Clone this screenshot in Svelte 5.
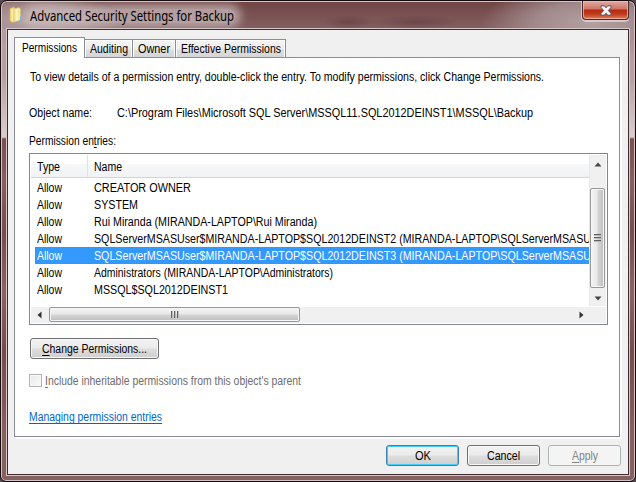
<script>
  const tabs = [
    { label: 'Permissions', box: 71, text: 55, active: true },
    { label: 'Auditing', box: 48, text: 38 },
    { label: 'Owner', box: 43, text: 32 },
    { label: 'Effective Permissions', box: 110, text: 100 }
  ];
  const rows = [
    { name: 'CREATOR OWNER', width: 97 },
    { name: 'SYSTEM', width: 44 },
    { name: 'Rui Miranda (MIRANDA-LAPTOP\\Rui Miranda)', width: 223 },
    { name: 'SQLServerMSASUser$MIRANDA-LAPTOP$SQL2012DEINST2 (MIRANDA-LAPTOP\\SQLServerMSASU', width: 497 },
    { name: 'SQLServerMSASUser$MIRANDA-LAPTOP$SQL2012DEINST3 (MIRANDA-LAPTOP\\SQLServerMSASU', width: 497, selected: true },
    { name: 'Administrators (MIRANDA-LAPTOP\\Administrators)', width: 239 },
    { name: 'MSSQL$SQL2012DEINST1', width: 134 }
  ];
  const objectPath = 'C:\\Program Files\\Microsoft SQL Server\\MSSQL11.SQL2012DEINST1\\MSSQL\\Backup';

  // Condenses a line of text to the given width in pixels.
  function fit(node, width) {
    const natural = node.getBoundingClientRect().width;
    node.style.width = width + 'px';
    node.style.transform = `scaleX(${width / natural})`;
  }
</script>

<div class="desktop">
  <div class="window">
    <header class="titlebar">
      <svg class="folder" width="14" height="17" viewBox="0 0 14 17">
        <path d="M1 2.5 5 1l1 1.5V15l-2 1.5L1 15z" fill="#f4dc80" stroke="#d9b84e" stroke-width=".6" />
        <path d="M5 3 10 1.5 11.5 3v11L5 16z" fill="#f9e99b" stroke="#dfc263" stroke-width=".6" />
        <path d="M7 3.5h2v11H7z" fill="#fff6c4" />
        <path d="M3.2 3v12.5" stroke="#fff3b8" />
        <path d="M11 10.5h1.5v4.5H11z" fill="#65b4dd" />
      </svg>
      <h1><span use:fit={204}>Advanced Security Settings for Backup</span></h1>
      <div class="close">
        <svg width="12" height="11" viewBox="0 0 12 11">
          <path d="M1 .8h3.4L6 2.8 7.6.8H11v1.6L8.4 5.5 11 8.5v1.7H7.6L6 8.2 4.4 10.2H1V8.5l2.6-3L1 2.4z" fill="#f6f4f4" stroke="#59505e" stroke-width="1" />
        </svg>
      </div>
    </header>

    <main class="client">
      <nav>
        {#each tabs as tab}
          <div class="tab" class:active={tab.active} style:width="{tab.box}px">
            <span use:fit={tab.text}>{tab.label}</span>
          </div>
        {/each}
      </nav>
      <section class="panel">
        <p class="intro"><span use:fit={514}>To view details of a permission entry, double-click the entry. To modify permissions, click Change Permissions.</span></p>
        <p class="object">
          <span class="key"><span use:fit={63}>Object name:</span></span>
          <span use:fit={416}>{objectPath}</span>
        </p>
        <p class="caption"><span use:fit={87}>Permission en<u>t</u>ries:</span></p>

        <div class="list">
          <div class="upper">
            <div class="table">
              <div class="head">
                <div class="type"><span use:fit={23}>Type</span></div>
                <div class="name"><span use:fit={28}>Name</span></div>
              </div>
              {#each rows as row}
                <div class="row" class:selected={row.selected}>
                  <div class="allow"><span use:fit={25}>Allow</span></div>
                  <span use:fit={row.width}>{row.name}</span>
                </div>
              {/each}
            </div>
            <div class="vbar">
              <svg class="up" width="8" height="5" viewBox="0 0 8 5"><path d="M4 .5 7.5 4.5h-7z" fill="#444" /></svg>
              <div class="vthumb"><i></i><i></i><i></i></div>
              <svg class="down" width="8" height="5" viewBox="0 0 8 5"><path d="M4 4.5 7.5.5h-7z" fill="#444" /></svg>
            </div>
          </div>
          <div class="hbar">
            <svg class="left" width="5" height="8" viewBox="0 0 5 8"><path d="M.5 4 4.5 .5v7z" fill="#333" /></svg>
            <div class="hthumb"><i></i><i></i><i></i></div>
            <svg class="right" width="5" height="8" viewBox="0 0 5 8"><path d="M4.5 4 .5 .5v7z" fill="#333" /></svg>
          </div>
        </div>

        <div class="button change"><span use:fit={105}><u>C</u>hange Permissions...</span></div>
        <div class="inherit">
          <div class="check"></div>
          <span use:fit={256}><u>I</u>nclude inheritable permissions from this object's parent</span>
        </div>
        <p class="link"><span use:fit={133}>Managing permission entries</span></p>
      </section>
      <footer>
        <div class="button ok"><span use:fit={16}>OK</span></div>
        <div class="button"><span use:fit={33}>Cancel</span></div>
        <div class="button disabled"><span use:fit={26}><u>A</u>pply</span></div>
      </footer>
    </main>
  </div>
</div>

<style>
  .desktop, .desktop * { box-sizing: border-box; }
  .desktop {
    width: 636px; height: 482px; overflow: hidden; background: #55484c;
    font: 12px/14px "Liberation Sans", Arial, sans-serif; color: #000;
  }
  p, h1 { margin: 0; font-size: inherit; font-weight: inherit; }
  span { display: inline-block; white-space: pre; transform-origin: 0 0; flex: none; }
  .window {
    width: 636px; height: 482px; padding: 0 6px 5px 5px;
    border: 1px solid #160b0f; border-radius: 7px 7px 6px 6px;
    box-shadow: inset 0 0 0 1px #d5c4c5;
    background:
      radial-gradient(ellipse 90px 28px at 30px 20px, #b7a3a5, rgba(175,155,157,.7) 60%, transparent),
      radial-gradient(ellipse 110px 40px at 590px 22px, #b3a0a1, rgba(165,143,145,.9) 50%, transparent),
      radial-gradient(ellipse 26px 7px at 347px 21px, rgba(85,50,58,.45), transparent),
      radial-gradient(ellipse 42px 7px at 416px 21px, rgba(85,50,58,.45), transparent),
      linear-gradient(#704543, #835f61 28px, transparent 28px),
      linear-gradient(#b7a0a2 28px, #b59fa0 75px, #dacfcf 136px, #79504f 138px, #875f60 180px, #744d4e 230px, #896465 290px, #744c4d 350px, #84605f 430px, #84605f);
  }
  .titlebar { display: flex; height: 28px; padding-left: 3px; align-items: flex-start; overflow: hidden; }
  .folder { margin-top: 5px; }
  h1 {
    width: 208px; height: 14px; margin: 8px auto 0 5px; padding-left: 2px; font: 14px/14px "Noto Sans", "Open Sans", sans-serif;
    border-radius: 7px; background: rgba(205,191,193,.7); box-shadow: 0 0 9px 5px rgba(205,191,193,.7);
  }
  .close {
    width: 47px; height: 19px; display: flex; justify-content: center; padding-top: 4px;
    border: 1px solid #4a2a2a; border-top: 0; border-radius: 0 0 4px 4px;
    background: linear-gradient(#e1aaa2, #cd7565 8px, #b72a12 9px, #c03a1d 13px, #d8805b);
    box-shadow: inset 0 0 0 1px rgba(242,191,179,.7), 0 1px 0 1px rgba(229,215,216,.75);
  }
  .client {
    width: 622px; height: 446px; margin-left: 1px; padding: 7px 8px 0 6px;
    border: 1px solid #3c2c30; box-shadow: 0 0 0 1px #d8c8c9; background: #f0f0f0;
  }
  nav { display: flex; align-items: flex-end; height: 20px; }
  .tab {
    height: 18px; display: flex; justify-content: center; padding-top: 2px;
    border: 1px solid #8a8d99; border-left: 0; border-bottom: 0;
    background: linear-gradient(#f4f4f4, #ededed 9px, #dedede 10px, #d5d5d5);
    box-shadow: inset 1px 1px #fff, inset -1px 0 #fff;
  }
  .tab.active {
    position: relative; height: 21px; margin-bottom: -1px; padding-top: 3px; border-left: 1px solid #8a8d99; background: #fff;
  }
  .panel {
    width: 606px; height: 380px; border: 1px solid #8a8d99; background: #fff;
    box-shadow: 1px 1px #fff, 2px 2px #fafafa; padding: 12px 0 0 14px;
  }
  .intro { height: 36px; padding-left: 1px; }
  .object { height: 28px; display: flex; }
  .key { width: 88px; }
  .caption { height: 19px; }
  u { text-decoration: underline; text-underline-offset: 2px; text-decoration-thickness: 1px; }
  .list { width: 579px; height: 172px; border: 1px solid #828790; padding: 1px; }
  .upper { display: flex; height: 152px; }
  .table { width: 559px; overflow: hidden; }
  .head {
    height: 23px; margin-bottom: 1px; display: flex; border-bottom: 1px solid #d5d5d5;
    background: linear-gradient(#fff 9px, #f7f8fa 9px, #f1f2f4);
  }
  .type { width: 57px; padding: 5px 0 0 6px; border-right: 1px solid #e1e2e4; }
  .name { padding: 5px 0 0 6px; }
  .row { display: flex; height: 17px; margin-left: 4px; padding: 2px 0 0 2px; width: 900px; }
  .allow { width: 57px; flex: none; }
  .row.selected { color: #fff; background: #3399ff; padding: 1px 0 0 1px; border: 1px dotted #c87128; }
  .vbar { width: 17px; height: 151px; background: #f0f0f0; display: flex; flex-direction: column; align-items: center; border-left: 1px solid #e9e9e9; }
  .up { margin-top: 7px; flex: none; }
  .vthumb {
    width: 15px; height: 100px; margin: 21px 1px 0 0; flex: none; display: flex; flex-direction: column; align-items: center; justify-content: center; gap: 1px;
    border: 1px solid #989898; border-radius: 2px; background: linear-gradient(90deg, #f5f5f5, #e8e8e8 6px, #d5d5d5 7px, #bcbcbc); box-shadow: inset 0 0 0 1px #f6f6f6;
  }
  .vthumb i { width: 7px; height: 2px; background: linear-gradient(#606060 50%, #bbb 50%); }
  .down { margin-top: 8px; flex: none; }
  .hbar { display: flex; height: 16px; width: 575px; background: #f0f0f0; align-items: flex-start; }
  .left { margin: 4px 0 0 6px; }
  .hthumb {
    width: 251px; height: 15px; margin-left: 7px; display: flex; align-items: center; justify-content: center; gap: 1px;
    border: 1px solid #989898; border-radius: 2px; background: linear-gradient(#f5f5f5, #e8e8e8 6px, #d5d5d5 7px, #bcbcbc); box-shadow: inset 0 0 0 1px #f6f6f6;
  }
  .hthumb i { height: 7px; width: 2px; background: linear-gradient(90deg, #606060 50%, #bbb 50%); }
  .right { margin: 4px 0 0 279px; }
  .button {
    width: 73px; height: 21px; display: flex; justify-content: center; padding-top: 3px;
    border: 1px solid #707070; border-radius: 3px; background: linear-gradient(#f2f2f2, #ebebeb 9px, #dddddd 10px, #cfcfcf);
    box-shadow: inset 0 0 0 1px #f7f7f7;
  }
  .change { width: 129px; margin: 13px 0 0 1px; }
  .inherit { display: flex; margin-top: 15px; height: 14px; color: #6d6d6d; }
  .check { width: 13px; height: 13px; margin-right: 3px; border: 1px solid #b1b1b1; background: linear-gradient(135deg, #e7e7e7, #fafafa); box-shadow: inset 0 0 0 1px #f9f9f9; }
  .link { margin-top: 22px; color: #0066cc; }
  .link span { text-decoration: underline; text-underline-offset: 2px; text-decoration-skip-ink: none; }
  footer { display: flex; justify-content: flex-end; gap: 8px; margin: 8px -1px 0 0; }
  .ok { border-color: #3c7fb1; box-shadow: inset 0 0 0 1px #45cdf5; }
  .disabled { color: #838383; border-color: #adb2b5; background: #f4f4f4; }
</style>
